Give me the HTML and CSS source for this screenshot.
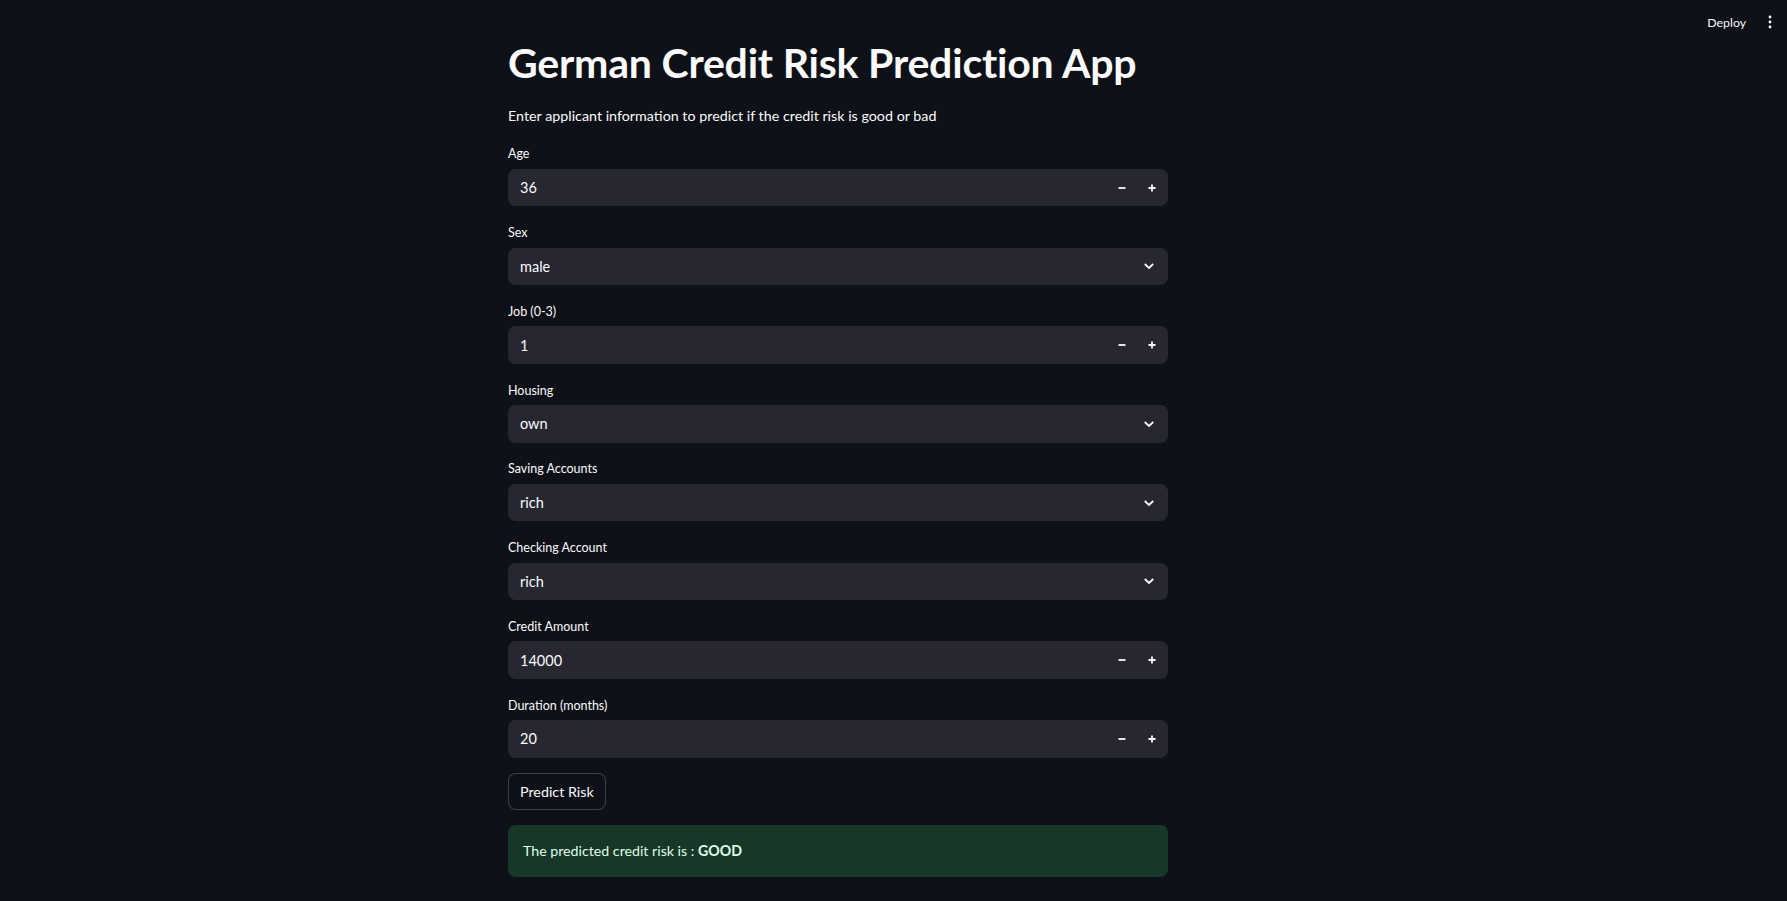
FILE: index.html
```html
<!DOCTYPE html>
<html lang="en">
<head>
<meta charset="utf-8">
<title>German Credit Risk Prediction App</title>
<link rel="stylesheet" href="styles.css">
</head>
<body>
<header class="topbar">
  <span class="deploy">Deploy</span>
  <span class="menu" aria-label="menu">
    <svg width="6" height="16" viewBox="0 0 6 16"><circle cx="3" cy="3" r="1.4"/><circle cx="3" cy="8" r="1.4"/><circle cx="3" cy="13" r="1.4"/></svg>
  </span>
</header>
<main class="main">
  <h1 class="title">German Credit Risk Prediction App</h1>
  <p class="intro">Enter applicant information to predict if the credit risk is good or bad</p>

  <div class="field">
    <label class="label">Age</label>
    <div class="box">
      <span class="value">36</span>
      <span class="step"><svg width="10" height="10" viewBox="0 0 10 10"><path d="M1.5 5h7"/></svg></span>
      <span class="step"><svg width="10" height="10" viewBox="0 0 10 10"><path d="M1.5 5h7M5 1.5v7"/></svg></span>
    </div>
  </div>

  <div class="field">
    <label class="label">Sex</label>
    <div class="box">
      <span class="value">male</span>
      <span class="chev"><svg width="12" height="8" viewBox="0 0 12 8"><path d="M1.8 2l4.2 4 4.2-4"/></svg></span>
    </div>
  </div>

  <div class="field">
    <label class="label">Job (0-3)</label>
    <div class="box">
      <span class="value">1</span>
      <span class="step"><svg width="10" height="10" viewBox="0 0 10 10"><path d="M1.5 5h7"/></svg></span>
      <span class="step"><svg width="10" height="10" viewBox="0 0 10 10"><path d="M1.5 5h7M5 1.5v7"/></svg></span>
    </div>
  </div>

  <div class="field">
    <label class="label">Housing</label>
    <div class="box">
      <span class="value">own</span>
      <span class="chev"><svg width="12" height="8" viewBox="0 0 12 8"><path d="M1.8 2l4.2 4 4.2-4"/></svg></span>
    </div>
  </div>

  <div class="field">
    <label class="label">Saving Accounts</label>
    <div class="box">
      <span class="value">rich</span>
      <span class="chev"><svg width="12" height="8" viewBox="0 0 12 8"><path d="M1.8 2l4.2 4 4.2-4"/></svg></span>
    </div>
  </div>

  <div class="field">
    <label class="label">Checking Account</label>
    <div class="box">
      <span class="value">rich</span>
      <span class="chev"><svg width="12" height="8" viewBox="0 0 12 8"><path d="M1.8 2l4.2 4 4.2-4"/></svg></span>
    </div>
  </div>

  <div class="field">
    <label class="label">Credit Amount</label>
    <div class="box">
      <span class="value">14000</span>
      <span class="step"><svg width="10" height="10" viewBox="0 0 10 10"><path d="M1.5 5h7"/></svg></span>
      <span class="step"><svg width="10" height="10" viewBox="0 0 10 10"><path d="M1.5 5h7M5 1.5v7"/></svg></span>
    </div>
  </div>

  <div class="field">
    <label class="label">Duration (months)</label>
    <div class="box">
      <span class="value">20</span>
      <span class="step"><svg width="10" height="10" viewBox="0 0 10 10"><path d="M1.5 5h7"/></svg></span>
      <span class="step"><svg width="10" height="10" viewBox="0 0 10 10"><path d="M1.5 5h7M5 1.5v7"/></svg></span>
    </div>
  </div>

  <div><button class="btn">Predict Risk</button></div>

  <div class="alert">The predicted credit risk is : <strong>GOOD</strong></div>
</main>
</body>
</html>
```
FILE: styles.css
```css
html, body {
  margin: 0;
  padding: 0;
  background: #0e1117;
  color: #fafafa;
  font-family: Lato, "Liberation Sans", sans-serif;
}
body {
  min-height: 901px;
  overflow: hidden;
}
.topbar {
  position: absolute;
  top: 0;
  right: 0;
  height: 44px;
  display: flex;
  align-items: center;
  gap: 21px;
  padding-right: 14px;
}
.deploy {
  font-size: 12.3px;
  color: #fafafa;
}
.menu svg {
  display: block;
  fill: #fafafa;
}
.main {
  width: 660px;
  margin-left: 508px;
  padding-top: 37.5px;
  display: flex;
  flex-direction: column;
  gap: 15px;
}
.title {
  margin: 0;
  font-size: 41px;
  font-weight: 700;
  line-height: 49px;
  letter-spacing: -0.2px;
}
.intro {
  margin: 0;
  font-size: 14.3px;
  line-height: 24px;
  margin-top: 2px;
}
.field {
  display: flex;
  flex-direction: column;
}
.label {
  height: 22.5px;
  margin-bottom: 3.75px;
  display: flex;
  align-items: center;
  font-size: 12.5px;
}
.box {
  height: 37.5px;
  background: #262730;
  border-radius: 7.5px;
  display: flex;
  align-items: center;
  padding-left: 12px;
  padding-right: 1px;
  box-sizing: border-box;
}
.value {
  flex: 1;
  font-size: 14.5px;
}
.step {
  width: 30px;
  height: 100%;
  display: flex;
  align-items: center;
  justify-content: center;
}
.step svg, .chev svg {
  display: block;
  fill: none;
  stroke: #fafafa;
  stroke-width: 1.8;
}
.chev {
  width: 37px;
  display: flex;
  justify-content: center;
}
.btn {
  height: 37.5px;
  padding: 0 11px;
  background: #0e1117;
  color: #fafafa;
  border: 1px solid rgba(250, 250, 250, 0.2);
  border-radius: 7.5px;
  font-family: inherit;
  font-size: 14.3px;
  cursor: pointer;
}
.alert {
  background: rgba(61, 213, 109, 0.2);
  color: #dffde9;
  border-radius: 7.5px;
  padding: 14px 15px;
  font-size: 14.2px;
  line-height: 24px;
}
.alert strong {
  font-weight: 700;
}
```
